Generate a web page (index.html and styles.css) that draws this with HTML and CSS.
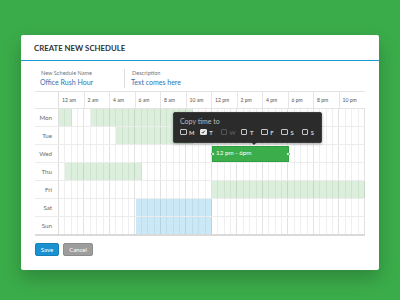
FILE: index.html
```html
<!DOCTYPE html>
<html>
<head>
<meta charset="utf-8">
<link rel="stylesheet" href="styles.css">
</head>
<body>
<div class="card">
  <div class="card-header">CREATE NEW SCHEDULE</div>
  <div class="form">
    <div class="field first">
      <div class="label">New Schedule Name</div>
      <div class="value">Office Rush Hour</div>
    </div>
    <div class="field">
      <div class="label">Description</div>
      <div class="value">Text comes here</div>
    </div>
  </div>
  <div class="schedule">
    <div class="row head">
      <div class="day"></div>
      <div class="hours">
        <div class="hour">12 am</div><div class="hour">2 am</div><div class="hour">4 am</div><div class="hour">6 am</div><div class="hour">8 am</div><div class="hour">10 am</div><div class="hour">12 pm</div><div class="hour">2 pm</div><div class="hour">4 pm</div><div class="hour">6 pm</div><div class="hour">8 pm</div><div class="hour">10 pm</div>
      </div>
    </div>
    <div class="row">
      <div class="day">Mon</div>
      <div class="track">
        <div class="bar light" style="grid-column: 1 / 3"></div>
        <div class="bar light" style="grid-column: 6 / 22"></div>
      </div>
    </div>
    <div class="row">
      <div class="day">Tue</div>
      <div class="track">
        <div class="bar light" style="grid-column: 10 / 22"></div>
      </div>
    </div>
    <div class="row">
      <div class="day">Wed</div>
      <div class="track">
        <div class="bar active" style="grid-column: 25 / 37">
          <span class="handle left"></span>
          <span class="bar-text">12 pm - 6pm</span>
          <span class="handle right"></span>
          <div class="tooltip">
            <div class="tip-title">Copy time to</div>
            <div class="days">
              <div class="opt"><span class="box"></span>M</div>
              <div class="opt"><span class="box checked"><svg viewBox="0 0 8 8" width="6" height="6"><path d="M1.5 4.2 L3.3 6 L6.6 1.8" fill="none" stroke="#2a2a2a" stroke-width="1.5"/></svg></span>T</div>
              <div class="opt disabled"><span class="box"></span>W</div>
              <div class="opt"><span class="box"></span>T</div>
              <div class="opt"><span class="box"></span>F</div>
              <div class="opt"><span class="box"></span>S</div>
              <div class="opt"><span class="box"></span>S</div>
            </div>
          </div>
        </div>
      </div>
    </div>
    <div class="row">
      <div class="day">Thu</div>
      <div class="track">
        <div class="bar light" style="grid-column: 2 / 14"></div>
      </div>
    </div>
    <div class="row">
      <div class="day">Fri</div>
      <div class="track">
        <div class="bar light" style="grid-column: 25 / 49"></div>
      </div>
    </div>
    <div class="row">
      <div class="day">Sat</div>
      <div class="track">
        <div class="bar blue" style="grid-column: 13 / 25"></div>
      </div>
    </div>
    <div class="row last">
      <div class="day">Sun</div>
      <div class="track">
        <div class="bar blue" style="grid-column: 13 / 25"></div>
      </div>
    </div>
  </div>
  <div class="actions">
    <button class="btn save">Save</button>
    <button class="btn cancel">Cancel</button>
  </div>
</div>
</body>
</html>
```

FILE: styles.css
```css
* { box-sizing: border-box; }
html, body { margin: 0; padding: 0; }
body {
  width: 400px;
  height: 300px;
  background: #3bac4a;
  font-family: Lato, "Open Sans", sans-serif;
  overflow: hidden;
  padding-top: 35px;
}
.card {
  margin: 0 21px;
  width: 358px;
  background: #fff;
  border-radius: 2px;
  padding: 0 14px 14px;
  box-shadow: 0 8px 18px rgba(0, 0, 0, 0.22);
}
.card-header {
  height: 26px;
  margin: 0 -14px;
  padding-left: 13px;
  display: flex;
  align-items: center;
  font-size: 7.8px;
  font-weight: 700;
  color: #333;
  border-bottom: 1px solid #1b98d5;
}
.form {
  display: flex;
  padding: 8px 0 3px;
}
.field {
  padding: 0 6px;
}
.field.first {
  width: 90px;
  padding-left: 5px;
  border-right: 1px solid #dedede;
}
.label {
  font-size: 5.6px;
  line-height: 8px;
  color: #777;
  padding-left: 1px;
}
.value {
  font-size: 7px;
  line-height: 11px;
  color: #2a74b6;
}
.schedule {
  border-top: 1px solid #e2e2e2;
  border-bottom: 2px solid #dadada;
}
.row {
  display: flex;
  height: 18px;
  border-bottom: 1px solid #ececec;
}
.row.head { height: 17px; border-bottom: 1px solid #e4e4e4; }
.row.last { border-bottom: none; height: 17px; }
.day {
  width: 24px;
  flex: none;
  border-right: 1px solid #dedede;
  font-size: 6.2px;
  color: #6a6a6a;
  text-align: right;
  padding-right: 6px;
  display: flex;
  align-items: center;
  justify-content: flex-end;
}
.hours {
  display: grid;
  grid-template-columns: repeat(12, 25.5px);
  width: 306px;
}
.hour {
  border-right: 1px solid #e6e6e6;
  font-size: 5.1px;
  color: #555;
  padding-left: 3px;
  display: flex;
  align-items: center;
  white-space: nowrap;
}
.hour:last-child { border-right: none; }
.track {
  width: 306px;
  display: grid;
  grid-template-columns: repeat(48, 1fr);
  grid-template-rows: 1fr;
  background-image:
    repeating-linear-gradient(to right, transparent 0 24.5px, #e2e2e2 24.5px 25.5px),
    repeating-linear-gradient(to right, transparent 0 5.375px, #efefef 5.375px 6.375px);
}
.bar { grid-row: 1; }
.bar.light { background: rgba(76, 175, 80, 0.2); }
.bar.blue { background: rgba(64, 170, 220, 0.27); }
.bar.active {
  position: relative;
  background: #3cad4b;
  border: 1px solid #30a040;
  margin-top: 1px;
  display: flex;
  align-items: center;
}
.bar-text {
  font-size: 6.3px;
  color: #fff;
  padding-left: 3px;
  margin-top: -3px;
}
.handle {
  position: absolute;
  top: 50%;
  width: 4px;
  height: 4px;
  margin-top: -2px;
  border-radius: 50%;
  background: #fff;
  border: 1px solid #3cad4b;
}
.handle.left { left: -2.5px; }
.handle.right { right: -2.5px; }
.tooltip {
  position: absolute;
  left: -40px;
  bottom: calc(100% + 4px);
  width: 149px;
  height: 31px;
  background: #2b2b2b;
  border: 1px solid #3c3c3c;
  border-radius: 2px;
  box-shadow: 0 1px 3px rgba(0, 0, 0, 0.35);
  padding: 3px 0 0 6px;
  z-index: 5;
}
.tooltip::after {
  content: "";
  position: absolute;
  left: 77px;
  top: 100%;
  border: 3px solid transparent;
  border-top: 3px solid #2b2b2b;
  border-bottom: none;
}
.tip-title {
  font-size: 7px;
  color: #bcbcbc;
  line-height: 10px;
}
.days {
  display: grid;
  grid-template-columns: repeat(7, 20.3px);
  margin-top: 2px;
}
.opt {
  display: flex;
  align-items: center;
  gap: 2.5px;
  font-size: 5.8px;
  font-weight: 700;
  color: #d4d4d4;
  height: 8px;
}
.opt.disabled { color: #5a5a5a; }
.box {
  width: 6.5px;
  height: 6.5px;
  border: 1px solid #c8c8c8;
  border-radius: 1px;
  display: flex;
  align-items: center;
  justify-content: center;
  flex: none;
}
.opt.disabled .box { border-color: #555; }
.box.checked {
  background: #e6e6e6;
  border-color: #e6e6e6;
}
.box svg { display: block; }
.actions {
  display: flex;
  gap: 4px;
  margin-top: 7px;
}
.btn {
  height: 13px;
  padding: 0;
  border-radius: 2px;
  font-family: inherit;
  font-size: 6px;
  color: #fff;
  display: flex;
  align-items: center;
  justify-content: center;
}
.btn.save {
  width: 24px;
  background: #1a92d2;
  border: 1px solid #167fb8;
}
.btn.cancel {
  width: 30px;
  background: #9d9d9d;
  border: 1px solid #8c8c8c;
}
```
